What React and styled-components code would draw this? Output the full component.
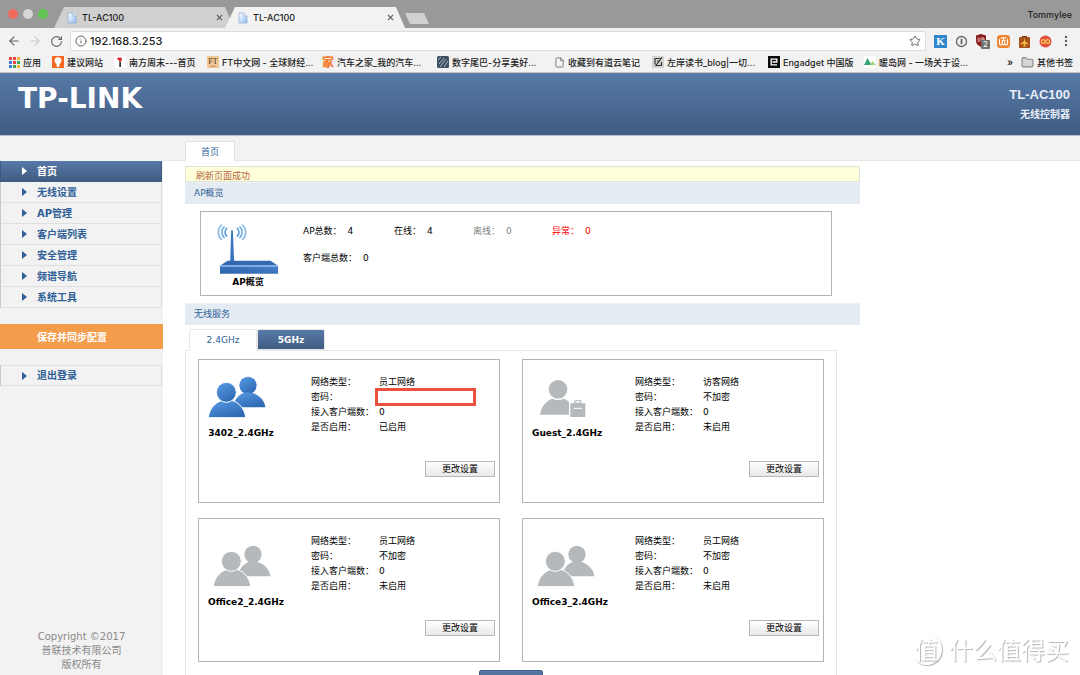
import { useState, Fragment } from "react";
import styled, { createGlobalStyle, css } from "styled-components";
import {
  ArrowLeft,
  ArrowRight,
  RotateCw,
  Info,
  Star,
  MoreVertical,
  Folder,
  File,
  X,
} from "lucide-react";

const GlobalStyle = createGlobalStyle`
  * {
    box-sizing: border-box;
  }
  body {
    margin: 0;
    background: #ffffff;
    font-family: "DejaVu Sans", "Noto Sans CJK SC", sans-serif;
    font-size: 9px;
    line-height: 15px;
    color: #000000;
  }
  button,
  input {
    font-family: inherit;
    font-size: inherit;
    margin: 0;
    padding: 0;
  }
  ul, dl, dd, h1, h2, h3, p {
    margin: 0;
    padding: 0;
  }
  ul {
    list-style: none;
  }
  a {
    color: inherit;
    text-decoration: none;
  }
  svg {
    display: block;
    flex-shrink: 0;
  }
`;

//데이터
const bookmarks = [
  { name: "应用", icon: "apps", w: 43 },
  { name: "建议网站", icon: "bulb", w: 62 },
  { name: "南方周末---首页", icon: "nfzm", w: 93 },
  { name: "FT中文网 - 全球财经...", icon: "ft", w: 115 },
  { name: "汽车之家_我的汽车...", icon: "car", w: 115 },
  { name: "数字尾巴-分享美好...", icon: "dgtle", w: 117 },
  { name: "收藏到有道云笔记", icon: "file", w: 98 },
  { name: "左岸读书_blog|一切...", icon: "zuoan", w: 116 },
  { name: "Engadget 中国版", icon: "engadget", w: 96 },
  { name: "暖岛网 - 一场关于设...", icon: "island", w: 116 },
];

const menus = [
  "首页",
  "无线设置",
  "AP管理",
  "客户端列表",
  "安全管理",
  "频谱导航",
  "系统工具",
];

const stats = [
  { label: "AP总数：", value: 4 },
  { label: "在线：", value: 4 },
  { label: "离线：", value: 0, color: "#808080" },
  { label: "异常：", value: 0, color: "#ff0000" },
  { label: "客户端总数：", value: 0 },
];

const networks = [
  {
    name: "3402_2.4GHz",
    icon: "staff",
    active: true,
    type: "员工网络",
    password: null,
    clients: 0,
    status: "已启用",
  },
  {
    name: "Guest_2.4GHz",
    icon: "guest",
    type: "访客网络",
    password: "不加密",
    clients: 0,
    status: "未启用",
  },
  {
    name: "Office2_2.4GHz",
    icon: "staff",
    low: true,
    type: "员工网络",
    password: "不加密",
    clients: 0,
    status: "未启用",
  },
  {
    name: "Office3_2.4GHz",
    icon: "staff",
    low: true,
    type: "员工网络",
    password: "不加密",
    clients: 0,
    status: "未启用",
  },
];

//아이콘
const PageIcon = () => (
  <svg width="10" height="12" viewBox="0 0 10 12">
    <defs>
      <linearGradient id="page" x1="0" y1="0" x2="1" y2="1">
        <stop offset="0" stopColor="#ffffff" />
        <stop offset="1" stopColor="#8fbcf0" />
      </linearGradient>
    </defs>
    <path
      d="M1 1h5l3 3v7H1z"
      fill="url(#page)"
      stroke="#8aa9cf"
      strokeWidth="0.7"
    />
    <path d="M6 1v3h3" fill="#fff" stroke="#8aa9cf" strokeWidth="0.7" />
  </svg>
);

const appColors = [
  "#e8453c", "#e8453c", "#f3b32a",
  "#3d7de0", "#e8453c", "#3da757",
  "#3d7de0", "#3da757", "#f3b32a",
];

const BookmarkIcon = ({ type }) => {
  switch (type) {
    case "apps":
      return (
        <svg width="11" height="11" viewBox="0 0 11 11">
          {appColors.map((c, i) => (
            <rect
              key={i}
              x={(i % 3) * 4}
              y={Math.floor(i / 3) * 4}
              width="3"
              height="3"
              fill={c}
            />
          ))}
        </svg>
      );
    case "bulb":
      return (
        <svg width="12" height="12" viewBox="0 0 12 12">
          <rect width="12" height="12" fill="#f26a22" />
          <circle cx="6" cy="4.6" r="3.4" fill="#fff" />
          <path d="M4.3 7h3.4l-.6 4H4.9z" fill="#fff" />
        </svg>
      );
    case "nfzm":
      return (
        <svg width="12" height="12" viewBox="0 0 12 12">
          <rect width="12" height="12" fill="#fff" />
          <path d="M2.5 2.5L5 1.6l3 .2-.6 3.6-2.3.4-.6-2z" fill="#d7262b" />
          <path d="M5.3 6h1.6v5H5.3z" fill="#222" />
        </svg>
      );
    case "ft":
      return (
        <svg width="12" height="12" viewBox="0 0 12 12">
          <rect width="12" height="12" fill="#f3c793" />
          <text
            x="6"
            y="8"
            textAnchor="middle"
            fontFamily="Liberation Serif, serif"
            fontSize="8"
            fill="#4a3826"
          >
            FT
          </text>
          <path d="M3 10.2h6" stroke="#b08a5c" strokeWidth="0.8" />
        </svg>
      );
    case "car":
      return <CarMark>家</CarMark>;
    case "dgtle":
      return (
        <svg width="12" height="12" viewBox="0 0 12 12">
          <rect width="12" height="12" rx="1.5" fill="#3d4f61" />
          <path
            d="M1 4l3-3M2 8l5-6M3 11l6-8M7 11l4-6"
            stroke="#a9b6c2"
            strokeWidth="1"
          />
        </svg>
      );
    case "file":
      return <File size={11} strokeWidth={2} color="#777" />;
    case "zuoan":
      return (
        <svg width="12" height="12" viewBox="0 0 12 12">
          <rect width="12" height="12" fill="#d4d4d0" />
          <path
            d="M2.5 2.5h7M3 2.5v6M10 1.5L3.5 10M5 5h3M4 9.5h5.5V6"
            stroke="#333"
            strokeWidth="1.2"
            fill="none"
          />
        </svg>
      );
    case "engadget":
      return (
        <svg width="12" height="12" viewBox="0 0 12 12">
          <rect width="12" height="12" fill="#0d0d0d" />
          <path
            d="M9 8.8H3.2V3.2h5.6V6H4.5"
            stroke="#fff"
            strokeWidth="1.3"
            fill="none"
          />
        </svg>
      );
    default:
      return (
        <svg width="12" height="12" viewBox="0 0 12 12">
          <rect width="12" height="12" fill="#fff" />
          <path d="M0 9l3.5-7L7.5 9z" fill="#35a67b" />
          <path d="M6 9l2.5-4L12 9z" fill="#a6d77b" />
        </svg>
      );
  }
};

const RouterIcon = () => (
  <svg width="62" height="52" viewBox="110 190 188 154">
    <defs>
      <linearGradient id="router" x1="0" y1="1" x2="1" y2="0">
        <stop offset="0" stopColor="#2a62a8" />
        <stop offset="1" stopColor="#4681cb" />
      </linearGradient>
    </defs>
    <g fill="none" stroke="#5b9be0" strokeWidth="5">
      <path d="M141 203a16 16 0 0 0 0 26" />
      <path d="M133 198a24 24 0 0 0 0 36" opacity="0.85" />
      <path d="M125 193a30 30 0 0 0 0 46" opacity="0.7" />
      <path d="M170 203a16 16 0 0 1 0 26" />
      <path d="M178 198a24 24 0 0 1 0 36" opacity="0.85" />
      <path d="M186 193a30 30 0 0 1 0 46" opacity="0.7" />
    </g>
    <path d="M153 210h5l4 95h-12z" fill="#3a74bf" />
    <path d="M142 303h130l23 15H119z" fill="#3269b0" />
    <rect x="119" y="316" width="176" height="4" fill="#8ab4e6" />
    <rect x="119" y="320" width="176" height="22" fill="url(#router)" />
  </svg>
);

const StaffIcon = ({ active }) => {
  const fill = active ? "url(#people)" : "#b5b9bc";
  return (
    <svg width="58" height="42" viewBox="88 168 174 126">
      <defs>
        <linearGradient id="people" x1="0" y1="0" x2="0.6" y2="1">
          <stop offset="0" stopColor="#5a9ce6" />
          <stop offset="1" stopColor="#2f6ab4" />
        </linearGradient>
      </defs>
      <circle cx="208" cy="196" r="26" fill={fill} />
      <path d="M162 262C166 236 186 217 208 217S258 236 260 262z" fill={fill} />
      <path
        d="M89 293C91 264 115 239 145 239S199 264 201 293z"
        fill={fill}
        stroke="#fff"
        strokeWidth="3"
      />
      <circle
        cx="143"
        cy="217"
        r="30"
        fill={fill}
        stroke="#fff"
        strokeWidth="3"
      />
    </svg>
  );
};

const GuestIcon = () => (
  <svg width="46" height="39" viewBox="92 120 138 117">
    <path d="M92 227C95 198 119 176 146 176S190 192 194 227z" fill="#b5b9bc" />
    <circle
      cx="146"
      cy="151"
      r="30"
      fill="#b5b9bc"
      stroke="#fff"
      strokeWidth="4"
    />
    <path
      d="M181 236v-45h12v-9h25v9h12v45z"
      fill="#b5b9bc"
      stroke="#fff"
      strokeWidth="4"
    />
    <path d="M198 191v-4h15v4z" fill="#fff" />
    <path d="M193 208h26" stroke="#fff" strokeWidth="3" />
  </svg>
);

const Extensions = () => (
  <Fragment>
    <ToolButton aria-label="K">
      <svg width="13" height="13" viewBox="0 0 13 13">
        <rect width="13" height="13" fill="#2f86cc" />
        <text
          x="6.5"
          y="10"
          textAnchor="middle"
          fontFamily="Liberation Serif, serif"
          fontWeight="700"
          fontSize="11"
          fill="#fff"
        >
          K
        </text>
      </svg>
    </ToolButton>
    <ToolButton aria-label="1Password">
      <svg width="13" height="13" viewBox="0 0 13 13">
        <circle
          cx="6.5"
          cy="6.5"
          r="5"
          fill="none"
          stroke="#666"
          strokeWidth="1.3"
        />
        <path d="M6.5 3.8v5.4" stroke="#666" strokeWidth="1.8" />
      </svg>
    </ToolButton>
    <ToolButton aria-label="uBlock">
      <svg width="15" height="15" viewBox="0 0 15 15">
        <path d="M6 0l5 1.5V7c0 3-2 4.5-5 6-3-1.5-5-3-5-6V1.5z" fill="#8c1a1a" />
        <path
          d="M3 3.5v3c0 1.5 2 1.5 2 0v-3M7 3.5v4M7 4h2v2H7"
          stroke="#e9caca"
          strokeWidth="0.9"
          fill="none"
        />
        <rect x="6" y="6" width="9" height="9" rx="1" fill="#6f6f6f" />
        <text
          x="10.5"
          y="13"
          textAnchor="middle"
          fontFamily="Inter, sans-serif"
          fontSize="8"
          fill="#fff"
        >
          2
        </text>
      </svg>
    </ToolButton>
    <ToolButton aria-label="淘">
      <svg width="13" height="13" viewBox="0 0 13 13">
        <rect width="13" height="13" rx="3" fill="#f08632" />
        <path
          d="M2.5 4v4.5c0 2 2.7 2 2.7 0V5M5.2 8.5c0 1.5 2.6 1.5 2.6 0V5M7.800 8.500c0 2 2.700 2 2.700 0V4M3.500 3h6M6.500 2v4"
          stroke="#fff"
          strokeWidth="1.1"
          fill="none"
        />
      </svg>
    </ToolButton>
    <ToolButton aria-label="行李">
      <svg width="13" height="13" viewBox="0 0 13 13">
        <path d="M4 1h5v2H4z" fill="#7a3a12" />
        <rect x="1" y="2" width="11" height="11" rx="1" fill="#a8501c" />
        <path
          d="M6.5 3l.8 3.5 3 2v1l-3-1v2l1 1H4.700l1-1v-2l-3 1v-1l3-2z"
          fill="#f1c244"
        />
      </svg>
    </ToolButton>
    <ToolButton aria-label="无限">
      <svg width="13" height="13" viewBox="0 0 13 13">
        <circle cx="6.5" cy="6.5" r="6" fill="#e0503d" />
        <g fill="none" stroke="#f7c65a" strokeWidth="1.2">
          <circle cx="4.3" cy="6.5" r="1.9" />
          <circle cx="8.7" cy="6.5" r="1.9" />
        </g>
      </svg>
    </ToolButton>
  </Fragment>
);

const Browser = () => (
  <BrowserBox>
    <TabStrip>
      <Lights>
        <Light $color="#ee6a5f" />
        <Light $color="#d6d6d6" />
        <Light $color="#61c554" />
      </Lights>
      <BrowserTab>
        <PageIcon />
        <TabTitle>TL-AC100</TabTitle>
        <X size={9} strokeWidth={3} color="#666" />
      </BrowserTab>
      <BrowserTab $on>
        <PageIcon />
        <TabTitle>TL-AC100</TabTitle>
        <X size={9} strokeWidth={3} color="#666" />
      </BrowserTab>
      <NewTab type="button" aria-label="新标签页" />
      <UserName>Tommylee</UserName>
    </TabStrip>
    <ToolBar>
      <ToolButton aria-label="后退">
        <ArrowLeft size={14} color="#666" />
      </ToolButton>
      <ToolButton aria-label="前进">
        <ArrowRight size={14} color="#ccc" />
      </ToolButton>
      <ToolButton aria-label="刷新">
        <RotateCw size={13} color="#666" />
      </ToolButton>
      <AddressBar>
        <Info size={12} color="#666" />
        <input aria-label="地址" defaultValue="192.168.3.253" />
        <Star size={12} color="#666" />
      </AddressBar>
      <Extensions />
      <ToolButton aria-label="菜单">
        <MoreVertical size={14} color="#555" />
      </ToolButton>
    </ToolBar>
    <BookmarkBar>
      {bookmarks.map((item) => (
        <Bookmark href="#" key={item.name} $w={item.w}>
          <BookmarkIcon type={item.icon} />
          <span>{item.name}</span>
        </Bookmark>
      ))}
      <More>»</More>
      <Bookmark href="#">
        <Folder size={13} color="#888" fill="#d5d5d5" />
        <span>其他书签</span>
      </Bookmark>
    </BookmarkBar>
  </BrowserBox>
);

const NetworkCard = ({ data }) => (
  <Card>
    <Identity $low={data.low}>
      {data.icon === "guest" ? <GuestIcon /> : <StaffIcon active={data.active} />}
      <h3>{data.name}</h3>
    </Identity>
    <Details>
      <dt>网络类型：</dt>
      <dd>{data.type}</dd>
      <dt>
        <label htmlFor={`pw-${data.name}`}>密码：</label>
      </dt>
      <dd>
        {data.password === null ? (
          <PasswordInput id={`pw-${data.name}`} type="text" />
        ) : (
          <output id={`pw-${data.name}`}>{data.password}</output>
        )}
      </dd>
      <dt>接入客户端数：</dt>
      <dd>{data.clients}</dd>
      <dt>是否启用：</dt>
      <dd>{data.status}</dd>
    </Details>
    <EditBtn type="button">更改设置</EditBtn>
  </Card>
);

const App = () => {
  const [band, setBand] = useState("2.4GHz");

  return (
    <Wrap>
      <GlobalStyle />
      <Browser />
      <Header>
        <Logo>TP-LINK</Logo>
        <Model>
          <h2>TL-AC100</h2>
          <p>无线控制器</p>
        </Model>
      </Header>
      <Body>
        <SideBar>
          <nav>
            <ul>
              {menus.map((name, i) => (
                <li key={name}>
                  <MenuLink href="#" $on={i === 0}>
                    <Arrow />
                    {name}
                  </MenuLink>
                </li>
              ))}
            </ul>
          </nav>
          <SaveBtn type="button">保存并同步配置</SaveBtn>
          <MenuLink href="#" $first>
            <Arrow />
            退出登录
          </MenuLink>
          <Copyright>
            <p>Copyright ©2017</p>
            <p>普联技术有限公司</p>
            <p>版权所有</p>
          </Copyright>
        </SideBar>
        <Main>
          <PageTabs>
            <PageTab type="button">首页</PageTab>
          </PageTabs>
          <Content>
            <Notice>刷新页面成功</Notice>
            <SectionTitle>AP概览</SectionTitle>
            <Overview>
              <OverviewIcon>
                <RouterIcon />
                <h3>AP概览</h3>
              </OverviewIcon>
              <Stats>
                {stats.map((item) => (
                  <Stat key={item.label} $color={item.color}>
                    <dt>{item.label}</dt>
                    <dd>{item.value}</dd>
                  </Stat>
                ))}
              </Stats>
            </Overview>
            <SectionTitle>无线服务</SectionTitle>
            <BandTabs>
              {["2.4GHz", "5GHz"].map((name) => (
                <BandTab
                  type="button"
                  key={name}
                  $on={band === name}
                  onClick={() => setBand(name)}
                >
                  {name}
                </BandTab>
              ))}
            </BandTabs>
            <Panel>
              <Cards>
                {networks.map((item) => (
                  <NetworkCard key={item.name} data={item} />
                ))}
              </Cards>
              <RefreshBtn type="button" aria-label="刷新" />
            </Panel>
          </Content>
        </Main>
      </Body>
      <WaterMark>
        <Seal>值</Seal>
        <span>什么值得买</span>
      </WaterMark>
    </Wrap>
  );
};

const blueBar = css`
  background: linear-gradient(#587aa8, #3f5c82);
`;

const Wrap = styled.div`
  display: flex;
  flex-direction: column;
  height: 100vh;
  overflow: hidden;
`;

//브라우저
const BrowserBox = styled.div`
  flex-shrink: 0;
  font-family: Inter, "Noto Sans CJK SC", sans-serif;
  font-weight: 500;
  background: #f2f2f2;
  border-bottom: 1px solid #c4c4c4;
  color: #222222;
`;

const TabStrip = styled.div`
  display: flex;
  height: 28px;
  padding: 7px 8px 0;
  background: #999999;
`;

const Lights = styled.div`
  display: flex;
  gap: 5px;
  width: 46px;
  padding-top: 2px;
`;

const Light = styled.span`
  width: 10px;
  height: 10px;
  border-radius: 50%;
  background: ${({ $color }) => $color};
`;

const BrowserTab = styled.div`
  display: flex;
  align-items: center;
  gap: 5px;
  width: 180px;
  padding: 0 10px 0 13px;
  background: ${({ $on }) => ($on ? "#f2f2f2" : "#d0d0d0")};
  clip-path: polygon(10px 0, calc(100% - 9px) 0, 100% 100%, 0 100%);
  & + & {
    margin-left: -9px;
    z-index: 1;
  }
`;

const TabTitle = styled.span`
  flex: 1;
  line-height: 20px;
`;

const NewTab = styled.button`
  width: 24px;
  height: 11px;
  margin-top: 6px;
  border: 0;
  background: #d0d0d0;
  clip-path: polygon(0 0, 19px 0, 100% 100%, 5px 100%);
`;

const UserName = styled.span`
  margin-left: auto;
`;

const ToolBar = styled.div`
  display: flex;
  align-items: center;
  gap: 7px;
  height: 26px;
  padding: 0 7px;
`;

const ToolButton = styled.button.attrs({ type: "button" })`
  display: flex;
  align-items: center;
  justify-content: center;
  width: 14px;
  height: 20px;
  border: 0;
  background: none;
`;

const AddressBar = styled.div`
  display: flex;
  flex: 1;
  align-items: center;
  gap: 3px;
  height: 20px;
  padding: 0 4px;
  border: 1px solid #dddddd;
  border-radius: 2px;
  background: #ffffff;
  input {
    flex: 1;
    min-width: 0;
    border: 0;
    outline: none;
    background: none;
    font-size: 11px;
    font-weight: 500;
    color: #222222;
  }
`;

const BookmarkBar = styled.div`
  display: flex;
  align-items: center;
  height: 18px;
  padding: 0 7px 2px 9px;
`;

const Bookmark = styled.a`
  display: flex;
  flex-shrink: 0;
  align-items: center;
  gap: 3px;
  width: ${({ $w }) => ($w ? `${$w}px` : "auto")};
  white-space: nowrap;
`;

const CarMark = styled.b`
  width: 12px;
  font-size: 12px;
  font-weight: 900;
  line-height: 15px;
  color: #f47b2c;
`;

const More = styled.span`
  margin-left: auto;
  margin-right: 8px;
  font-size: 10px;
`;

//헤더
const Header = styled.header`
  display: flex;
  flex-shrink: 0;
  justify-content: space-between;
  height: 63px;
  padding: 11px 10px 0 18px;
  border-bottom: 1px solid #b4c0d0;
  color: #ffffff;
  ${blueBar}
`;

const Logo = styled.h1`
  font-weight: 700;
  font-size: 28px;
  line-height: 30px;
`;

const Model = styled.div`
  font-family: "Liberation Sans", "Noto Sans CJK SC", sans-serif;
  font-weight: 700;
  text-align: right;
  color: #e8eef6;
  h2 {
    font-size: 13px;
    line-height: 21px;
  }
  p {
    font-size: 10px;
    line-height: 20px;
  }
`;

const Body = styled.div`
  display: grid;
  grid-template-columns: 163px 1fr;
  grid-template-rows: minmax(0, 1fr);
  flex: 1;
  min-height: 0;
`;

//사이드바
const SideBar = styled.aside`
  display: flex;
  flex-direction: column;
  padding: 25px 0 3px;
  background: #f2f2f2;
`;

const Arrow = styled.span`
  width: 0;
  height: 0;
  border: 4px solid transparent;
  border-left: 5px solid currentColor;
  border-right: 0;
`;

const MenuLink = styled.a`
  display: flex;
  flex-shrink: 0;
  align-items: center;
  gap: 10px;
  height: 21px;
  margin-right: 1px;
  padding-left: 21px;
  border: 1px solid #dfdfe2;
  border-top: ${({ $first }) => ($first ? "1px solid #dfdfe2" : "0")};
  border-left-color: #c8c8c8;
  font-weight: 700;
  font-size: 10px;
  color: #2f5f96;
  ${({ $on }) =>
    $on &&
    css`
      border-color: #3f5c82;
      color: #ffffff;
      ${blueBar}
    `}
`;

const SaveBtn = styled.button`
  flex-shrink: 0;
  height: 25px;
  margin: 16px 0;
  padding-left: 37px;
  border: 0;
  background: #f39c4b;
  font-weight: 700;
  font-size: 10px;
  text-align: left;
  color: #ffffff;
`;

const Copyright = styled.footer`
  margin-top: auto;
  font-size: 10px;
  line-height: 14px;
  text-align: center;
  color: #888888;
`;

//본문
const Main = styled.main`
  min-width: 0;
`;

const PageTabs = styled.div`
  display: flex;
  align-items: flex-end;
  height: 25px;
  padding-left: 22px;
  border-bottom: 1px solid #e6e6e6;
  background: #f2f2f2;
`;

const PageTab = styled.button`
  width: 50px;
  height: 20px;
  margin-bottom: -1px;
  border: 1px solid #e0e0e0;
  border-bottom: 0;
  border-radius: 2px 2px 0 0;
  background: #ffffff;
  color: #2f5f96;
`;

const Content = styled.div`
  max-width: 697px;
  padding: 5px 0 0 22px;
`;

const Notice = styled.p`
  height: 16px;
  padding: 2px 10px 0;
  border: 1px solid #dfe3dc;
  background: #ffffd9;
  line-height: 15px;
  color: #b4603c;
`;

const SectionTitle = styled.h2`
  padding: 0 9px;
  border-top: 1px solid #edf2f5;
  background: #e4ebf2;
  font-weight: 400;
  font-size: 9px;
  line-height: 21px;
  color: #2f6298;
`;

const Overview = styled.section`
  display: flex;
  margin: 7px 28px 7px 15px;
  height: 85px;
  padding: 11px 16px 0;
  border: 1px solid #b4b4b4;
`;

const OverviewIcon = styled.div`
  display: flex;
  flex-direction: column;
  align-items: center;
  width: 62px;
  margin-right: 24px;
  h3 {
    font-size: 9px;
    line-height: 15px;
  }
`;

const Stats = styled.dl`
  display: grid;
  grid-template-columns: 91px 79px 79px 79px;
  grid-auto-rows: 15px;
  row-gap: 12px;
  padding-top: 1px;
`;

const Stat = styled.div`
  display: flex;
  gap: 6px;
  white-space: nowrap;
  color: ${({ $color }) => $color || "#000000"};
`;

const BandTabs = styled.div`
  display: flex;
  padding: 4px 0 0 4px;
`;

const BandTab = styled.button`
  width: 68px;
  height: 22px;
  border: 1px solid #e6e6e6;
  border-radius: 2px 2px 0 0;
  ${({ $on }) =>
    $on
      ? css`
          margin-bottom: -1px;
          border-bottom-color: #ffffff;
          background: #ffffff;
          color: #2f5f96;
          z-index: 1;
        `
      : css`
          height: 21px;
          font-weight: 700;
          color: #ffffff;
          ${blueBar}
        `}
`;

const Panel = styled.section`
  margin-right: 23px;
  padding: 8px 12px;
  border: 1px solid #e6e6e6;
`;

const Cards = styled.div`
  display: grid;
  grid-template-columns: repeat(2, 1fr);
  gap: 15px 22px;
`;

const Card = styled.article`
  display: grid;
  grid-template-columns: 102px 1fr;
  grid-template-rows: 90px 1fr;
  height: 144px;
  padding: 11px 4px 0 9px;
  border: 1px solid #b4b4b4;
`;

const Identity = styled.div`
  display: flex;
  flex-direction: column;
  align-items: center;
  justify-content: flex-end;
  justify-self: start;
  height: ${({ $low }) => ($low ? "80px" : "70px")};
  svg {
    margin: 0 8px 8px 0;
  }
  h3 {
    font-size: 9px;
    line-height: 15px;
  }
`;

const Details = styled.dl`
  display: grid;
  grid-template-columns: 68px 1fr;
  grid-auto-rows: 15px;
  align-content: start;
  padding: 4px 0 0 1px;
  white-space: nowrap;
  dt,
  dd {
    height: 15px;
  }
`;

const PasswordInput = styled.input`
  display: block;
  width: 101px;
  height: 18px;
  margin: -2px 0 -1px -4px;
  border: 3px solid #ec5140;
  background: #ffffff;
  outline: none;
`;

const EditBtn = styled.button`
  grid-column: 2;
  justify-self: end;
  width: 70px;
  height: 16px;
  border: 1px solid #b8b8b8;
  background: linear-gradient(#ffffff, #e8e8e8);
  line-height: 14px;
`;

const RefreshBtn = styled.button`
  display: block;
  width: 64px;
  height: 20px;
  margin: 8px auto 0;
  border: 1px solid #3f5c82;
  border-radius: 2px;
  ${blueBar}
`;

const WaterMark = styled.div`
  position: fixed;
  right: 11px;
  bottom: 10px;
  display: flex;
  align-items: center;
  gap: 7px;
  font-family: "Noto Sans CJK SC", sans-serif;
  font-size: 24px;
  line-height: 32px;
  color: #ffffff;
  text-shadow: 1px 1px 1px #b4b4b4;
  pointer-events: none;
`;

const Seal = styled.span`
  width: 31px;
  height: 31px;
  border-radius: 50%;
  box-shadow: 1px 1px 1px #b4b4b4;
  line-height: 30px;
  text-align: center;
`;

export default App;
